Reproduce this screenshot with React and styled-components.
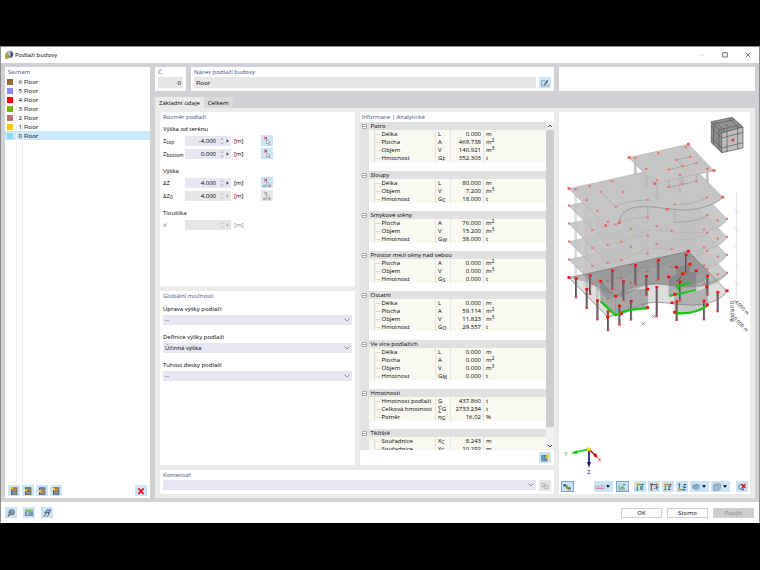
import styled, { createGlobalStyle, css } from "styled-components";
import { useState, Fragment } from "react";

const floors = [
    { no: 6, color: "#996a30" },
    { no: 5, color: "#8a8aff" },
    { no: 4, color: "#ff0000" },
    { no: 3, color: "#78b800" },
    { no: 2, color: "#bd7272" },
    { no: 1, color: "#f8c800" },
    { no: 0, color: "#8ed8f4" },
];

const groups = [
    { title: "Patro", rows: [
        ["Délka", "L", "", "0.000", "m"],
        ["Plocha", "A", "", "469.738", "m", "2"],
        ["Objem", "V", "", "140.921", "m", "3"],
        ["Hmotnost", "G", "F", "352.303", "t"],
    ]},
    { title: "Sloupy", rows: [
        ["Délka", "L", "", "80.000", "m"],
        ["Objem", "V", "", "7.200", "m", "3"],
        ["Hmotnost", "G", "C", "18.000", "t"],
    ]},
    { title: "Smykové stěny", rows: [
        ["Plocha", "A", "", "76.000", "m", "2"],
        ["Objem", "V", "", "15.200", "m", "3"],
        ["Hmotnost", "G", "W", "38.000", "t"],
    ]},
    { title: "Prostor mezi okny nad sebou", rows: [
        ["Plocha", "A", "", "0.000", "m", "2"],
        ["Objem", "V", "", "0.000", "m", "3"],
        ["Hmotnost", "G", "S", "0.000", "t"],
    ]},
    { title: "Ostatní", rows: [
        ["Délka", "L", "", "0.000", "m"],
        ["Plocha", "A", "", "59.114", "m", "2"],
        ["Objem", "V", "", "11.823", "m", "3"],
        ["Hmotnost", "G", "O", "29.557", "t"],
    ]},
    { title: "Ve více podlažích", rows: [
        ["Délka", "L", "", "0.000", "m"],
        ["Plocha", "A", "", "0.000", "m", "2"],
        ["Objem", "V", "", "0.000", "m", "3"],
        ["Hmotnost", "G", "M", "0.000", "t"],
    ]},
    { title: "Hmotnosti", rows: [
        ["Hmotnost podlaží", "G", "", "437.860", "t"],
        ["Celková hmotnost", "∑G", "", "2733.234", "t"],
        ["Poměr", "η", "G", "16.02", "%"],
    ]},
    { title: "Těžiště", rows: [
        ["Souřadnice", "X", "C", "8.243", "m"],
        ["Souřadnice", "Y", "C", "10.292", "m"],
    ]},
];

const SLAB = "M42 518 L400 439 L516 558 C498 590 450 602 395 600 C345 596 310 588 275 595 C240 602 225 620 199 627 L158 636 Z";
const ROOF = "M42 251 L400 172 L503 277 C480 298 440 312 395 315 C340 315 300 302 265 305 C215 310 196 326 193 353 L182 358 L152 362 Z";

const slabNodes = [
    [42, 518], [516, 558], [158, 636], [199, 627], [350, 594], [447, 590], [112, 592], [305, 580], [228, 588], [278, 554], [457, 546], [488, 563],
];

const roofNodes = [
    [62, 253], [104, 244], [172, 229], [137, 261], [205, 261], [95, 286], [127, 318], [182, 306], [278, 285], [359, 299], [455, 278], [159, 351], [182, 359],
    [241, 160], [310, 145], [393, 127], [405, 156], [364, 165], [424, 175], [383, 184], [341, 194], [274, 192], [457, 192], [375, 210], [306, 226], [341, 247], [383, 238], [424, 229],
];

const roofCorners = [[42, 251], [503, 277], [337, 313], [193, 353], [152, 362], [222, 158], [400, 118], [477, 197], [299, 236]];

const columns = [
    [393, 90, 145], [310, 106, 163], [241, 121, 178], [172, 137, 193], [105, 152, 208], [457, 153, 210], [274, 154, 210], [63, 161, 218],
    [205, 170, 226], [375, 171, 228], [305, 187, 275], [95, 193, 250], [488, 202, 260], [127, 227, 284], [447, 228, 284], [228, 229, 285],
    [365, 230, 286], [193, 243, 300], [159, 260, 317],
];

const wallNodes = [
    [42, 158], [400, 79], [516, 198], [158, 276], [199, 267], [137, 169], [182, 214], [278, 193], [278, 248], [351, 234], [359, 208], [359, 262],
    [457, 240], [455, 186], [364, 127], [405, 118], [424, 138], [383, 147], [341, 156],
];

const GlobalStyle = createGlobalStyle`
    * {
        box-sizing: border-box;
    }

    body {
        margin: 0;
        background: #000;
        font-family: "Open Sans", "Noto Sans", sans-serif;
        font-size: 6px;
        line-height: 8px;
        color: #000;
    }

    button, input, select {
        font: inherit;
        color: inherit;
        margin: 0;
        border: none;
        border-radius: 0;
    }
`;

const nodes = (list, size, color) => list.map(([x, y], i) => (
    <rect key={i} x={x - size / 2} y={y - size / 2} width={size} height={size - 1} fill={color} />
));

const NavigationCube = () => (
    <g stroke="#555" strokeWidth="2" strokeLinejoin="round">
        <path d="M469 50 L532 37 L564 66 L500 84 Z" fill="#929292" />
        <path d="M469 50 L500 84 L500 143 L469 113 Z" fill="#8f8f8f" />
        <path d="M500 84 L564 66 L564 129 L500 143 Z" fill="#bdbdbd" />
        <path d="M479 48 L511 81 M521 39 L553 69 M476 57 L540 43 M492 75 L556 59" fill="none" />
        <path d="M476 57 V120 M492 75 V135 M469 65 L500 99 M469 98 L500 129" fill="none" />
        <path d="M516 80 V140 M548 70 V133 M500 99 L564 82 M500 129 L564 113" fill="none" />
        <path d="M528 106 L536 102 M532 103 V109 M536 101 V109" stroke="#e03030" strokeWidth="3" fill="none" />
        <path d="M483 96 l6 6" stroke="#4f8f4f" />
        <path d="M511 59 l9 4" stroke="#5757a8" />
    </g>
);

const BuildingModel = () => (
    <Drawing viewBox="12 21 573 1104" role="img" aria-label="Model budovy">
        <g stroke="#c3c3c3" strokeWidth="8">
            {[62, 95, 127].map((x, i) => <path key={x} d={`M${x} ${262 + i * 32} V${520 + i * 32}`} stroke="#dcdcdc" />)}
            <path d="M241 170 V215 M457 192 V250" />
        </g>
        {[1, 2, 3, 4].map((level) => (
            <g key={level} transform={`translate(0 ${level * -54})`}>
                <path d={SLAB} fill="#c2c2c2" fillOpacity="0.88" stroke="#b2b2b2" strokeWidth="2" />
                <path d="M137 529 L182 574 C200 560 235 554 278 554 V500 M359 567 C390 567 430 563 457 546" fill="none" stroke="#b0b0b0" strokeWidth="2" />
                {nodes(slabNodes, 7, "#e57676")}
            </g>
        ))}
        <path d={ROOF} fill="#c5c5c5" stroke="#b2b2b2" strokeWidth="2" />
        <path d="M193 353 C195 315 230 305 265 305 C300 304 330 314 395 315 C445 312 480 298 503 277" fill="none" stroke="#a0a0a0" strokeWidth="3" />
        <path d="M137 261 L182 306 C200 292 240 286 278 285 M359 299 C395 300 435 290 455 278 M278 312 V340 M359 318 V352 C400 353 430 345 457 332" fill="none" stroke="#a2a2a2" strokeWidth="2" />
        <g stroke="#b9b9b9" strokeWidth="7">
            <path d="M274 194 V249 M306 235 V282 M375 215 V266" />
        </g>
        <path d="M222 158 L400 118 L477 197 L299 236 Z" fill="#c6c6c6" stroke="#adadad" strokeWidth="2" />
        <path d="M364 165 L405 156 M364 165 L383 184 M341 194 L424 175 M341 226 V247 L383 238 L424 229 V209 M383 218 V238" fill="none" stroke="#9a9a9a" strokeWidth="2" />
        {nodes(roofNodes, 7, "#ee7474")}
        {nodes(roofCorners, 9, "#f06262")}

        <g transform="translate(0 360)">
            <path d="M137 169 L182 214 V271 L137 227 Z" fill="#8a8a8a" fillOpacity="0.6" stroke="#8a8a8a" strokeWidth="1" />
            <path d="M182 214 C205 198 240 193 278 193 V248 C240 250 205 254 182 271 Z" fill="#909090" fillOpacity="0.65" stroke="#8a8a8a" strokeWidth="1" />
            <path d="M359 208 C400 207 435 201 457 186 V240 C435 256 400 266 359 264 Z" fill="#a0a0a0" fillOpacity="0.6" stroke="#8a8a8a" strokeWidth="1" />
            <path d="M341 156 L424 138 V195 L341 212 Z M364 127 L405 118 V175 L364 184 Z" fill="#707070" fillOpacity="0.45" />
            <path d="M42 158 L400 79 L516 198 C498 230 450 242 395 240 C345 236 310 228 275 235 C240 242 225 260 199 267 L158 276 Z" fill="#7c7c7c" fillOpacity="0.26" stroke="#757575" strokeWidth="2" />
            <path d="M42 158 L400 79 L462 143 C460 180 400 184 350 180 C300 172 250 175 182 214 L105 175 Z" fill="#6c6c6c" fillOpacity="0.32" />
            <path d="M182 214 C215 190 250 176 305 176 C345 178 360 187 410 184 C460 180 490 165 516 145" fill="none" stroke="#858585" strokeWidth="2" />
            {columns.map(([x, top, bottom]) => (
                <g key={`${x}-${top}`}>
                    <path d={`M${x} ${top} V${bottom}`} stroke="#65545f" strokeWidth="6" />
                    <path d={`M${x + 2} ${top} V${bottom}`} stroke="#91858d" strokeWidth="2" />
                    <rect x={x - 4} y={top - 4} width="9" height="7" fill="#f31212" />
                    <rect x={x - 4} y={bottom - 3} width="8" height="5" fill="#e84545" />
                </g>
            ))}
            <g fill="none" stroke="#16c816" strokeWidth="7">
                <path d="M137 229 L182 271 C205 254 240 251 278 250" />
                <path d="M359 264 C400 268 435 258 457 242" />
                <path d="M343 213 L424 195 M364 184 L405 174 M364 184 L371 195" strokeWidth="6" />
            </g>
            {nodes(wallNodes, 9, "#fb0808")}
            <path d="M260 235 l12 12 m0 -12 l-12 12 M290 268 l12 12 m0 -12 l-12 12 M259 290 l12 12 m0 -12 l-12 12" stroke="#777" strokeWidth="2" />
            <path d="M366 168 l12 -12" stroke="#222" strokeWidth="2" />
        </g>

        <path d="M545 262 V580 M537 259 l14 11 M537 313 l14 11 M537 367 l14 11 M537 421 l14 11 M537 475 l14 11 M537 529 l14 11" stroke="#cdd3d2" strokeWidth="2" />
        <g fill="#101c18" fontSize="15">
            <text transform="translate(537 650) rotate(-90)">Podlaží 0</text>
            <text transform="translate(534 588) rotate(45)">-4.000 m</text>
            <text transform="translate(534 642) rotate(45)">0.000 m</text>
        </g>

        <NavigationCube />

        <g strokeWidth="5" fontSize="17">
            <path d="M102 1033 L64 1041" stroke="#08cf08" />
            <path d="M47 1045 L66 1035 L67 1047 Z" fill="#08cf08" />
            <path d="M102 1033 L120 1050" stroke="#d60808" />
            <path d="M129 1060 L115 1053 L123 1044 Z" fill="#d60808" />
            <path d="M102 1033 V1074" stroke="#15157d" />
            <path d="M102 1088 L96 1071 H108 Z" fill="#15157d" />
            <circle cx="102" cy="1033" r="6" fill="#ecdf08" />
            <text x="28" y="1053" fill="#08b908">Y</text>
            <text x="129" y="1071" fill="#d60808">X</text>
            <text x="97" y="1107" fill="#15157d">Z</text>
        </g>
    </Drawing>
);

const PickIcon = ({ delta }) => (
    <Icon viewBox="0 0 36 30">
        <path d="M10 3 L18 10 M18 3 L10 10" stroke={delta === "off" ? "#999" : "#d62020"} strokeWidth="3" />
        <path d="M17 11 V24 L20 21 L23 27 L26 25 L23 20 H27 Z" fill="#fff" stroke="#8a8a8a" strokeWidth="2" />
        {delta && <path d="M7 24 H16 M7 24 l4 -3 M7 24 l4 3 M24 24 H31" stroke="#777" strokeWidth="2" fill="none" />}
    </Icon>
);

const ListIcon = ({ mark }) => (
    <Icon viewBox="0 0 36 30">
        <path d="M9 4 H28 V27 H9 Z" fill="#555b5d" />
        <path d="M12 9 H26 M12 14 H26 M12 19 H26 M12 24 H26" stroke="#c9d0d0" strokeWidth="2" />
        <path d={`M12 ${mark} H27`} stroke="#dc6a26" strokeWidth="4" />
        <path d={`M8 ${mark - 4} h7 v7 h-7 Z`} fill="#e4d51f" />
    </Icon>
);

const AxisIcon = ({ label, back }) => (
    <Icon viewBox="0 0 36 30">
        <path d={back ? "M10 6 V23 H24" : "M10 24 V8 H25"} fill="none" stroke="#21827d" strokeWidth="3" />
        {back
            ? <path d="M6 9 L10 3 L14 9 Z M23 19 L29 23 L23 27 Z" fill="#2162a2" />
            : <path d="M24 4 L31 8 L24 12 Z M6 22 L10 28 L14 22 Z" fill={label === "X" ? "#2a8d70" : "#d75727"} />}
        <circle cx="10" cy={back ? 23 : 8} r="4" fill={label === "-Y" ? "#da3e24" : "#e8a426"} />
        <text x="17" y={back ? 17 : 25} fontSize="15" fontWeight="700" fill="#184c4c">{label}</text>
    </Icon>
);

const App = () => {
    const [active, setActive] = useState(0);
    const [tab, setTab] = useState("basic");

    return <Screen>
        <GlobalStyle />
        <Dialog>
            <TitleBar>
                <Icon viewBox="0 0 36 30">
                    <circle cx="20" cy="13" r="11" fill="#68809b" />
                    <path d="M12 7 Q21 -1 28 8 L20 20 Z" fill="#b5c4cf" />
                    <path d="M22 3 Q34 11 25 23 Z" fill="#263f62" />
                    <path d="M6 11 H16 V27 H6 Z" fill="#d9b32f" />
                    <path d="M9 14 h4 m-4 5 h4 m-4 5 h4" stroke="#705d22" strokeWidth="2" />
                </Icon>
                <h1>Podlaží budovy</h1>
                <WindowButtons>
                    <button aria-label="Minimalizovat"><svg viewBox="0 0 18 18"><path d="M1 9 H17" stroke="#ccc" strokeWidth="2" /></svg></button>
                    <button aria-label="Maximalizovat"><svg viewBox="0 0 18 18"><path d="M2 2 H16 V15 H2 Z" fill="none" stroke="#333" strokeWidth="2" /></svg></button>
                    <button aria-label="Zavřít"><svg viewBox="0 0 18 18"><path d="M2 2 L16 16 M16 2 L2 16" stroke="#333" strokeWidth="2" /></svg></button>
                </WindowButtons>
            </TitleBar>

            <Body>
                <ListPanel>
                    <Heading>Seznam</Heading>
                    <FloorList>
                        {floors.map(({ no, color }) => (
                            <FloorRow key={no} $active={active === no} onClick={() => setActive(no)}>
                                <Swatch $color={color} />
                                <span>{no}</span>
                                <span>Floor</span>
                            </FloorRow>
                        ))}
                        <FloorFiller><i /><span /><span /></FloorFiller>
                    </FloorList>
                    <ListTools>
                        {[7, 13, 16, 10].map((mark, i) => (
                            <IconButton key={mark} aria-label={`Seznam ${i + 1}`}><ListIcon mark={mark} /></IconButton>
                        ))}
                        <Spacer />
                        <IconButton aria-label="Smazat">
                            <Icon viewBox="0 0 36 30"><path d="M10 7 L26 24 M26 7 L10 24" stroke="#ed1010" strokeWidth="5" /></Icon>
                        </IconButton>
                    </ListTools>
                </ListPanel>

                <Main>
                    <TopRow>
                        <TopPanel>
                            <Heading as="label" htmlFor="no">Č.</Heading>
                            <TopInput id="no" $right readOnly value="0" />
                        </TopPanel>
                        <TopPanel>
                            <Heading as="label" htmlFor="name">Název podlaží budovy</Heading>
                            <Inline>
                                <TopInput id="name" defaultValue="Floor" />
                                <IconButton aria-label="Upravit název">
                                    <Icon viewBox="0 0 36 30">
                                        <path d="M8 8 H18 M8 8 V24 H28 V19" fill="none" stroke="#66808f" strokeWidth="2" />
                                        <path d="M14 21 L24 6 L28 9 L18 22 Z" fill="#4d5c66" />
                                    </Icon>
                                </IconButton>
                            </Inline>
                        </TopPanel>
                        <TopPanel />
                    </TopRow>

                    <Tabs role="tablist">
                        <Tab role="tab" $active={tab === "basic"} onClick={() => setTab("basic")}>Základní údaje</Tab>
                        <Tab role="tab" $active={tab === "total"} onClick={() => setTab("total")}>Celkem</Tab>
                    </Tabs>

                    <Content>
                        <Forms>
                            <Columns>
                                <FormColumn>
                                    <Panel>
                                        <Heading>Rozměr podlaží</Heading>
                                        <Section>
                                            <h3>Výška od terénu</h3>
                                            <Measure id="ztop" label={<>Z<sub>top</sub></>} value="-4.000" icon={<PickIcon />} />
                                            <Measure id="zbottom" label={<>Z<sub>bottom</sub></>} value="0.000" icon={<PickIcon />} />
                                        </Section>
                                        <Section>
                                            <h3>Výška</h3>
                                            <Measure id="dz" label="ΔZ" value="4.000" icon={<PickIcon delta="on" />} />
                                            <Measure id="dz0" label={<>ΔZ<sub>0</sub></>} value="4.000" muted icon={<PickIcon delta="off" />} />
                                        </Section>
                                        <Section>
                                            <h3>Tloušťka</h3>
                                            <Measure id="d" label="d" value="" muted faded />
                                        </Section>
                                    </Panel>
                                    <Panel>
                                        <Heading>Globální možnosti</Heading>
                                        <Choice id="height" label="Úprava výšky podlaží" value="--" />
                                        <Choice id="definition" label="Definice výšky podlaží" value="Účinná výška" />
                                        <Choice id="stiffness" label="Tuhost desky podlaží" value="--" />
                                    </Panel>
                                </FormColumn>

                                <InfoPanel>
                                    <Heading>Informace | Analytické</Heading>
                                    <TreeArea>
                                        <TreeView>
                                            <Tree>
                                                <colgroup>
                                                    <col width="9" /><col width="67" /><col width="15" /><col width="33" /><col />
                                                </colgroup>
                                                <tbody>
                                                    {groups.map((group) => (
                                                        <Fragment key={group.title}>
                                                            <GroupRow>
                                                                <td><Toggle aria-label={`Sbalit ${group.title}`}><svg viewBox="0 0 5 5"><path d="M.5 .5 H4.5 V4.5 H.5 Z M1 2.5 H4" fill="#fff" stroke="#8b8b8b" strokeWidth=".7" /></svg></Toggle></td>
                                                                <th colSpan="4">{group.title}</th>
                                                            </GroupRow>
                                                            {group.rows.map(([name, symbol, sub, value, unit, power], i) => (
                                                                <ItemRow key={i}>
                                                                    <td />
                                                                    <td>{name}</td>
                                                                    <td>{symbol}{sub && <sub>{sub}</sub>}</td>
                                                                    <td>{value}</td>
                                                                    <td>{unit}{power && <sup>{power}</sup>}</td>
                                                                </ItemRow>
                                                            ))}
                                                            <GapRow $tall={group.rows.length > 3}><td /><td colSpan="4" /></GapRow>
                                                        </Fragment>
                                                    ))}
                                                </tbody>
                                            </Tree>
                                        </TreeView>
                                        <ScrollBar>
                                            <svg viewBox="0 0 8 8"><path d="M2 5 L4 3 L6 5" fill="none" stroke="#555" /></svg>
                                            <Thumb />
                                            <svg viewBox="0 0 8 8"><path d="M2 3 L4 5 L6 3" fill="none" stroke="#555" /></svg>
                                        </ScrollBar>
                                    </TreeArea>
                                    <InfoFooter>
                                        <IconButton aria-label="Přepočítat">
                                            <Icon viewBox="0 0 36 30">
                                                <path d="M7 6 H26 V25 H7 Z" fill="#517c9a" />
                                                <path d="M7 11 H26 M7 16 H26 M7 21 H26 M13 6 V25" stroke="#a9cbe0" strokeWidth="1" />
                                                <path d="M25 2 L19 15 H25 L22 27 L32 11 H26 L30 2 Z" fill="#f2c629" />
                                            </Icon>
                                        </IconButton>
                                    </InfoFooter>
                                </InfoPanel>
                            </Columns>

                            <CommentPanel>
                                <Heading as="label" htmlFor="comment">Komentář</Heading>
                                <Inline>
                                    <SelectBox id="comment" defaultValue=""><option value="" /></SelectBox>
                                    <IconButton $muted aria-label="Převzít komentář">
                                        <Icon viewBox="0 0 36 30">
                                            <path d="M8 7 H20 V17 H8 Z M15 13 H28 V23 H15 Z" fill="#ddd" stroke="#aaa" strokeWidth="2" />
                                        </Icon>
                                    </IconButton>
                                </Inline>
                            </CommentPanel>
                        </Forms>

                        <ViewPanel>
                            <BuildingModel />
                            <ViewTools>
                                <IconButton $pressed aria-label="Průhlednost">
                                    <Icon viewBox="0 0 36 30">
                                        <path d="M7 6 H15 V14 H7 Z M20 16 H29 V25 H20 Z" fill="#526d80" />
                                        <path d="M11 11 L19 8 L25 18 L17 22 Z" fill="#7f9a5c" />
                                        <path d="M22 23 h7" stroke="#d5b955" strokeWidth="4" />
                                    </Icon>
                                </IconButton>
                                <Spacer />
                                <IconButton $wide aria-label="Kóty">
                                    <Icon viewBox="0 0 36 30"><path d="M6 10 V20 H30 V10 M14 10 V20 M22 10 V20" fill="none" stroke="#d05b66" strokeWidth="2" /></Icon>
                                    <Caret viewBox="0 0 6 4"><path d="M0 0 H6 L3 4 Z" /></Caret>
                                </IconButton>
                                <IconButton $pressed aria-label="Zatížení">
                                    <Icon viewBox="0 0 36 30">
                                        <path d="M9 5 V24 H30" fill="none" stroke="#568c69" strokeWidth="2" />
                                        <path d="M11 20 C15 12 20 10 26 16 V21 H11 Z" fill="#75b276" />
                                        <path d="M19 5 H29 V11 H19 Z" fill="#84a5bd" />
                                    </Icon>
                                </IconButton>
                                <ToolSet>
                                    <IconButton aria-label="Pohled X"><AxisIcon label="X" /></IconButton>
                                    <IconButton aria-label="Pohled -Y"><AxisIcon label="-Y" /></IconButton>
                                    <IconButton aria-label="Pohled Z"><AxisIcon label="Z" /></IconButton>
                                    <IconButton aria-label="Pohled -Z"><AxisIcon label="-Z" back /></IconButton>
                                    <IconButton $wide aria-label="Vykreslení">
                                        <Icon viewBox="0 0 36 30"><path d="M7 9 L22 5 L28 10 V21 L17 25 L7 19 Z" fill="#7d9eb7" /><path d="M12 16 L24 11 L30 16 L19 26 Z" fill="#95b1c5" /></Icon>
                                        <Caret viewBox="0 0 6 4"><path d="M0 0 H6 L3 4 Z" /></Caret>
                                    </IconButton>
                                    <IconButton $wide aria-label="Zobrazení">
                                        <Icon viewBox="0 0 36 30"><path d="M7 10 L15 5 H29 V19 L22 25 H7 Z M7 10 H22 V25 M22 10 L29 5 M14 10 V25" fill="#b0c4d5" stroke="#7896ad" strokeWidth="2" /></Icon>
                                        <Caret viewBox="0 0 6 4"><path d="M0 0 H6 L3 4 Z" /></Caret>
                                    </IconButton>
                                </ToolSet>
                                <IconButton aria-label="Zrušit výběr">
                                    <Icon viewBox="0 0 36 30">
                                        <circle cx="15" cy="15" r="7" fill="none" stroke="#57707e" strokeWidth="3" />
                                        <path d="M19 20 L24 25" stroke="#57707e" strokeWidth="4" />
                                        <path d="M17 6 L29 18 M29 6 L17 18" stroke="#e51515" strokeWidth="4" />
                                    </Icon>
                                </IconButton>
                            </ViewTools>
                        </ViewPanel>
                    </Content>
                </Main>
            </Body>

            <Footer>
                <IconButton aria-label="Nápověda">
                    <Icon viewBox="0 0 36 30">
                        <circle cx="20" cy="13" r="9" fill="#687883" />
                        <path d="M16 10 Q20 5 24 10 Q23 13 20 14 V18" fill="none" stroke="#d7e1e8" strokeWidth="2" />
                        <path d="M9 25 L14 19" stroke="#4c5960" strokeWidth="4" />
                    </Icon>
                </IconButton>
                <IconButton aria-label="Jednotky">
                    <Icon viewBox="0 0 36 30">
                        <path d="M6 4 H30 V12 H6 Z" fill="#84be6f" />
                        <text x="5" y="25" fontSize="13" fontWeight="700" fill="#315978">0.00</text>
                    </Icon>
                </IconButton>
                <IconButton aria-label="Funkce">
                    <Icon viewBox="0 0 36 30">
                        <path d="M8 26 Q13 25 15 14 Q17 3 22 5 M10 13 H20" fill="none" stroke="#485d70" strokeWidth="3" />
                        <path d="M18 26 Q22 25 24 13 M18 14 H27" fill="none" stroke="#485d70" strokeWidth="3" />
                        <path d="M22 4 h8 v7 h-8 Z" fill="#6775aa" />
                    </Icon>
                </IconButton>
                <Spacer />
                <Actions>
                    <ActionButton>OK</ActionButton>
                    <ActionButton>Storno</ActionButton>
                    <ActionButton disabled>Použít</ActionButton>
                </Actions>
            </Footer>
        </Dialog>
    </Screen>
}

const Measure = ({ id, label, value, icon, muted, faded }) => (
    <MeasureRow $faded={faded}>
        <label htmlFor={id}>{label}</label>
        <NumberField $muted={muted}>
            <input id={id} defaultValue={value} disabled={muted} />
            <svg viewBox="0 0 18 30">
                <path d="M3 11 L6 8 L9 11 M3 20 L6 23 L9 20" fill="none" stroke={muted ? "#999" : "#555"} strokeWidth="2" />
            </svg>
            <svg viewBox="0 0 12 30"><path d="M2 10 L8 15 L2 20 Z" fill={muted ? "#aaa" : "#222"} /></svg>
        </NumberField>
        <span>[m]</span>
        {icon && <IconButton $muted={muted} disabled={muted} aria-label="Vybrat v modelu">{icon}</IconButton>}
    </MeasureRow>
);

const Choice = ({ id, label, value }) => (
    <ChoiceField>
        <label htmlFor={id}>{label}</label>
        <SelectBox id={id} defaultValue={value}><option>{value}</option></SelectBox>
    </ChoiceField>
);

const Screen = styled.div`
    height: 100vh;
    padding: 46px 0 47px;
    display: flex;
    background: #000;
`;

const Dialog = styled.div`
    flex: 1;
    min-width: 0;
    display: flex;
    flex-direction: column;
    background: #fff;
    border: 1px solid #8c8c8c;
    border-width: 1px 1px 0;
`;

const Icon = styled.svg`
    display: block;
    flex: none;
    width: 12px;
    height: 10px;
`;

const TitleBar = styled.header`
    display: flex;
    align-items: center;
    height: 16px;
    padding-left: 2px;
    flex: none;

    h1 {
        margin: 0;
        font-size: 6px;
        font-weight: 400;
    }
`;

const WindowButtons = styled.div`
    display: flex;
    margin-left: auto;

    button {
        width: 23px;
        height: 16px;
        padding: 0;
        background: none;
        display: flex;
        align-items: center;
        justify-content: center;
    }

    svg {
        width: 6px;
        height: 6px;
    }
`;

const Body = styled.div`
    flex: 1;
    min-height: 0;
    display: flex;
    gap: 5px;
    padding: 4px;
    background: #d0d0d5;
`;

const Panel = styled.section`
    display: flex;
    flex-direction: column;
    min-width: 0;
    padding: 0 3px 2px;
    background: #fff;
`;

const Heading = styled.h2`
    display: block;
    margin: 0;
    font-size: 6px;
    line-height: 10px;
    font-weight: 400;
    color: #3a5184;
`;

const ListPanel = styled(Panel)`
    flex: none;
    width: 145px;
    padding: 0;

    ${Heading} {
        padding-left: 3px;
    }
`;

const FloorList = styled.div`
    flex: 1;
    display: flex;
    flex-direction: column;
`;

const floorCells = css`
    display: grid;
    grid-template-columns: 11px 6px 1fr;

    span {
        border-left: 1px solid #eee;
    }
`;

const FloorRow = styled.button`
    ${floorCells}
    align-items: center;
    height: 9px;
    padding: 0;
    text-align: left;
    background: ${({ $active }) => ($active ? "#cce8ff" : "none")};

    span:nth-child(2) {
        text-align: right;
    }

    span:nth-child(3) {
        padding-left: 1px;
    }
`;

const FloorFiller = styled.div`
    ${floorCells}
    flex: 1;
`;

const Swatch = styled.i`
    width: 6px;
    height: 6px;
    margin-left: 2px;
    background: ${({ $color }) => $color};
`;

const ListTools = styled.div`
    display: flex;
    gap: 2px;
    padding: 3px 3px 2px;
`;

const Spacer = styled.div`
    flex: 1;
`;

const IconButton = styled.button`
    flex: none;
    display: flex;
    align-items: center;
    width: ${({ $wide }) => ($wide ? "19px" : "12px")};
    height: 11px;
    padding: 0;
    background: ${({ $muted }) => ($muted ? "#e6e6e6" : "#cce4f7")};
    ${({ $pressed }) => $pressed && css`
        width: 13px;
        outline: 1px solid #7fa5c4;
        outline-offset: -1px;
    `}
`;

const Main = styled.div`
    flex: 1;
    min-width: 0;
    display: flex;
    flex-direction: column;
`;

const TopRow = styled.div`
    display: grid;
    grid-template-columns: 31px 363fr 196fr;
    gap: 5px;
    height: 24px;
    flex: none;
`;

const TopPanel = styled(Panel)`
    padding-bottom: 3px;
`;

const Inline = styled.div`
    display: flex;
    gap: 3px;
`;

const TopInput = styled.input`
    flex: 1 1 10px;
    width: 100%;
    min-width: 0;
    height: 11px;
    padding: 0 2px;
    background: #e6e6e6;
    text-align: ${({ $right }) => ($right ? "right" : "left")};
`;

const Tabs = styled.div`
    display: flex;
    margin-top: 6px;
`;

const Tab = styled.button`
    height: 11px;
    padding: 0 4px;
    background: ${({ $active }) => ($active ? "#ebebeb" : "#dadada")};
`;

const Content = styled.div`
    flex: 1;
    min-height: 0;
    display: flex;
    gap: 5px;
    padding: 4px 5px;
    background: #ebebeb;
`;

const Forms = styled.div`
    flex: 394;
    min-width: 0;
    display: flex;
    flex-direction: column;
    gap: 5px;
`;

const Columns = styled.div`
    flex: 1;
    min-height: 0;
    display: grid;
    grid-template-columns: 1fr 1fr;
    grid-template-rows: minmax(0, 1fr);
    gap: 5px;
`;

const FormColumn = styled.div`
    min-width: 0;
    display: grid;
    grid-template-rows: 1fr 1fr;
    gap: 5px;
`;

const Section = styled.div`
    display: flex;
    flex-direction: column;
    gap: 2px;
    margin-bottom: 9px;

    ${Heading} + & {
        margin-top: 4px;
    }

    h3 {
        margin: 0;
        font-size: 6px;
        line-height: 7px;
        font-weight: 400;
    }
`;

const MeasureRow = styled.div`
    display: flex;
    align-items: center;
    height: 11px;
    color: ${({ $faded }) => ($faded ? "#888" : "inherit")};

    label {
        width: 22px;
    }

    sub {
        font-size: 5px;
        line-height: 0;
        vertical-align: -1px;
    }

    > span {
        width: 30px;
        padding-left: 3px;
    }
`;

const NumberField = styled.div`
    display: flex;
    width: 46px;
    height: 10px;
    background: ${({ $muted }) => ($muted ? "#e6e6e6" : "#e7e7f3")};

    input {
        flex: 1;
        min-width: 0;
        padding: 0;
        background: none;
        text-align: right;
    }

    svg {
        height: 10px;
        margin-left: 4px;
    }

    svg + svg {
        margin: 0 1px 0 0;
    }
`;

const ChoiceField = styled.div`
    display: flex;
    flex-direction: column;
    gap: 2px;
    margin: 4px 0 5px;

    & + & {
        margin-top: 3px;
    }
`;

const SelectBox = styled.select`
    appearance: none;
    flex: 1 1 auto;
    height: 10px;
    min-height: 10px;
    min-width: 0;
    padding: 0 2px;
    background: #e7e7f3 url("data:image/svg+xml,%3Csvg xmlns='http://www.w3.org/2000/svg' viewBox='0 0 6 4'%3E%3Cpath d='M.5 .5L3 3L5.5 .5' fill='none' stroke='%23666' stroke-width='.7'/%3E%3C/svg%3E") no-repeat right 2px center / 6px 4px;
`;

const InfoPanel = styled(Panel)`
    padding: 0;

    ${Heading} {
        padding-left: 2px;
    }
`;

const TreeArea = styled.div`
    flex: 1;
    min-height: 0;
    display: flex;
`;

const TreeView = styled.div`
    flex: 1;
    min-width: 0;
    overflow: hidden;
`;

const Tree = styled.table`
    width: 100%;
    table-layout: fixed;
    border-collapse: collapse;

    td, th {
        padding: 0;
        line-height: 8px;
        white-space: nowrap;
    }

    tr > td:first-child {
        background: #e3e3e3;
    }

    sub, sup {
        font-size: 5px;
        line-height: 0;
        vertical-align: -1px;
    }

    sup {
        vertical-align: 2px;
    }
`;

const GroupRow = styled.tr`
    height: 8px;
    background: #e1e1e1;

    th {
        padding-left: 2px;
        text-align: left;
        font-weight: 400;
    }
`;

const ItemRow = styled.tr`
    height: 8px;
    background: #f9f9f2;

    td:nth-child(2)::before {
        content: "";
        display: inline-block;
        width: 6px;
        height: 8px;
        margin: 0 1px 0 5px;
        vertical-align: top;
        border-left: 1px solid #ddd;
        background: linear-gradient(#ddd, #ddd) no-repeat 0 4px / 6px 1px;
    }

    td:nth-child(3), td:nth-child(4), td:nth-child(5) {
        padding-left: 2px;
        border-left: 1px solid #e4e4e0;
    }

    td:nth-child(4) {
        padding-right: 2px;
        text-align: right;
    }
`;

const GapRow = styled.tr`
    height: ${({ $tall }) => ($tall ? "9px" : "8px")};
`;

const Toggle = styled.button`
    display: block;
    width: 5px;
    height: 5px;
    margin: 0 0 0 2px;
    padding: 0;
    background: none;

    svg {
        display: block;
    }
`;

const ScrollBar = styled.div`
    display: flex;
    flex-direction: column;
    width: 8px;
    background: #f0f0f0;

    svg {
        flex: none;
        height: 8px;
    }
`;

const Thumb = styled.div`
    flex: 0 1 297px;
    margin-bottom: auto;
    background: #cdcdcd;
`;

const InfoFooter = styled.div`
    display: flex;
    justify-content: flex-end;
    padding: 2px 3px 2px;
`;

const CommentPanel = styled(Panel)`
    height: 24px;
`;

const ViewPanel = styled(Panel)`
    flex: 191;
    padding: 0;
`;

const Drawing = styled.svg`
    flex: 1;
    min-height: 0;
    width: 100%;
`;

const ViewTools = styled.div`
    display: flex;
    gap: 3px;
    padding: 1px 2px 2px;
`;

const ToolSet = styled.div`
    display: flex;
    gap: 2px;
    margin: 0 3px 0 2px;
`;

const Caret = styled.svg`
    flex: none;
    width: 4px;
    height: 3px;
`;

const Footer = styled.footer`
    flex: none;
    display: flex;
    align-items: center;
    gap: 6px;
    height: 21px;
    padding: 0 5px 0 4px;
`;

const Actions = styled.div`
    display: flex;
    gap: 5px;
`;

const ActionButton = styled.button`
    width: 41px;
    height: 10px;
    padding: 0;
    line-height: 8px;
    background: #fdfdfd;
    border: 1px solid #d0d0d0;

    &:disabled {
        background: #ccc;
        color: #888;
    }
`;

export default App;
